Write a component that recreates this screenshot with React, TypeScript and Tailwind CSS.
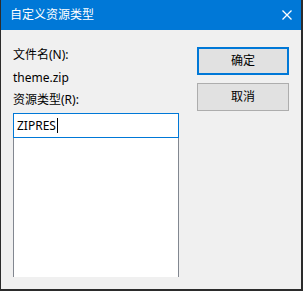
// 自定义资源类型 dialog
const font = "font-['Noto_Sans','Noto_Sans_CJK_SC',sans-serif]"

export default function App() {
  return (
    <div className={`w-[303px] h-[291px] flex flex-col border-l border-r-2 border-b-2 border-[#2b2b2b] bg-[#f0f0f0] ${font} text-[12px] text-black`}>
      {/* title bar */}
      <div className="h-[30px] shrink-0 bg-[#0078d7] flex items-center justify-between pl-[9px] pr-[9px] text-white">
        <span className="leading-none text-[12px]">自定义资源类型</span>
        <svg width="10" height="10" viewBox="0 0 10 10">
          <path d="M0.5 0.5 L9.5 9.5 M9.5 0.5 L0.5 9.5" stroke="#fff" strokeWidth="1.3" />
        </svg>
      </div>

      <div className="flex-1 flex pl-[12px] pr-[12px]">
        {/* left column */}
        <div className="w-[166px] flex flex-col">
          <div className="mt-[17px] leading-[16px]">文件名(N):</div>
          <div className="mt-[7px] leading-[16px]">theme.zip</div>
          <div className="mt-[6px] leading-[16px]">资源类型(R):</div>
          <div className="mt-[5px] h-[25px] border border-[#0078d7] bg-white flex items-center pl-[3px]">
            <span className="leading-none">ZIPRES</span>
            <span className="w-px h-[15px] bg-black ml-[1px]" />
          </div>
          <div className="h-[139px] border-x border-[#828790] bg-white" />
        </div>

        {/* buttons */}
        <div className="ml-auto w-[92px] flex flex-col gap-[8px] mt-[17px]">
          <button className="h-[28px] border-2 border-[#0078d7] bg-[#e1e1e1] leading-none">确定</button>
          <button className="h-[28px] border border-[#adadad] bg-[#e1e1e1] leading-none">取消</button>
        </div>
      </div>
    </div>
  )
}
